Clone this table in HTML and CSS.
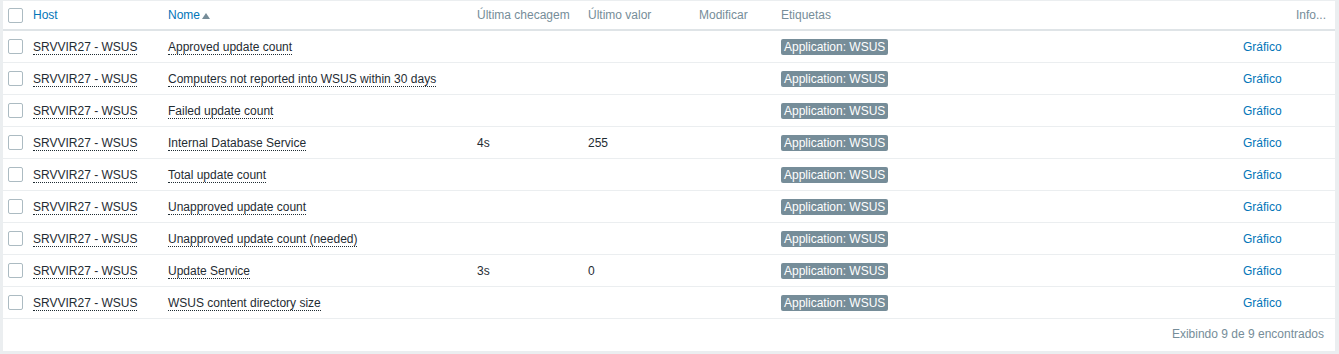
FILE: index.html
```html
<!DOCTYPE html>
<html lang="pt">
<head>
<meta charset="utf-8">
<title>Dados recentes</title>
<link rel="stylesheet" href="styles.css">
</head>
<body>
<div class="panel">
  <table class="list">
    <colgroup>
      <col class="c-check"><col class="c-host"><col class="c-name"><col class="c-last"><col class="c-val"><col class="c-chg"><col class="c-tags"><col class="c-graph"><col class="c-info">
    </colgroup>
    <thead>
      <tr>
        <th><span class="cb"></span></th>
        <th><a class="sort">Host</a></th>
        <th><a class="sort">Nome</a><span class="arrow"></span></th>
        <th>Última checagem</th>
        <th>Último valor</th>
        <th>Modificar</th>
        <th>Etiquetas</th>
        <th></th>
        <th class="right">Info...</th>
      </tr>
    </thead>
    <tbody>
      <tr><td><span class="cb"></span></td><td><span class="dot">SRVVIR27 - WSUS</span></td><td><span class="dot">Approved update count</span></td><td></td><td></td><td></td><td><span class="tag">Application: WSUS</span></td><td><a class="link">Gráfico</a></td><td></td></tr>
      <tr><td><span class="cb"></span></td><td><span class="dot">SRVVIR27 - WSUS</span></td><td><span class="dot">Computers not reported into WSUS within 30 days</span></td><td></td><td></td><td></td><td><span class="tag">Application: WSUS</span></td><td><a class="link">Gráfico</a></td><td></td></tr>
      <tr><td><span class="cb"></span></td><td><span class="dot">SRVVIR27 - WSUS</span></td><td><span class="dot">Failed update count</span></td><td></td><td></td><td></td><td><span class="tag">Application: WSUS</span></td><td><a class="link">Gráfico</a></td><td></td></tr>
      <tr><td><span class="cb"></span></td><td><span class="dot">SRVVIR27 - WSUS</span></td><td><span class="dot">Internal Database Service</span></td><td>4s</td><td>255</td><td></td><td><span class="tag">Application: WSUS</span></td><td><a class="link">Gráfico</a></td><td></td></tr>
      <tr><td><span class="cb"></span></td><td><span class="dot">SRVVIR27 - WSUS</span></td><td><span class="dot">Total update count</span></td><td></td><td></td><td></td><td><span class="tag">Application: WSUS</span></td><td><a class="link">Gráfico</a></td><td></td></tr>
      <tr><td><span class="cb"></span></td><td><span class="dot">SRVVIR27 - WSUS</span></td><td><span class="dot">Unapproved update count</span></td><td></td><td></td><td></td><td><span class="tag">Application: WSUS</span></td><td><a class="link">Gráfico</a></td><td></td></tr>
      <tr><td><span class="cb"></span></td><td><span class="dot">SRVVIR27 - WSUS</span></td><td><span class="dot">Unapproved update count (needed)</span></td><td></td><td></td><td></td><td><span class="tag">Application: WSUS</span></td><td><a class="link">Gráfico</a></td><td></td></tr>
      <tr><td><span class="cb"></span></td><td><span class="dot">SRVVIR27 - WSUS</span></td><td><span class="dot">Update Service</span></td><td>3s</td><td>0</td><td></td><td><span class="tag">Application: WSUS</span></td><td><a class="link">Gráfico</a></td><td></td></tr>
      <tr><td><span class="cb"></span></td><td><span class="dot">SRVVIR27 - WSUS</span></td><td><span class="dot">WSUS content directory size</span></td><td></td><td></td><td></td><td><span class="tag">Application: WSUS</span></td><td><a class="link">Gráfico</a></td><td></td></tr>
    </tbody>
  </table>
  <div class="paging">Exibindo 9 de 9 encontrados</div>
</div>
</body>
</html>
```

FILE: styles.css
```css
html, body {
  margin: 0;
  padding: 0;
  background: #ebeef0;
}
body {
  font-family: "Liberation Sans", Arial, sans-serif;
  font-size: 12px;
  color: #1f2c33;
  padding: 1px 4px 3px 3px;
}
.panel {
  background: #ffffff;
  height: 350px;
}
.list {
  width: 100%;
  border-collapse: collapse;
  table-layout: fixed;
}
.c-check { width: 25px; }
.c-host { width: 135px; }
.c-name { width: 309px; }
.c-last { width: 111px; }
.c-val { width: 111px; }
.c-chg { width: 82px; }
.c-tags { width: 462px; }
.c-graph { width: 51px; }
.c-info { width: auto; }
.list th {
  text-align: left;
  font-weight: normal;
  color: #768d99;
  height: 28px;
  padding: 0 5px;
  border-bottom: 2px solid #dfe4e7;
  white-space: nowrap;
  vertical-align: middle;
}
.list th.right {
  text-align: right;
  padding-right: 9px;
}
.list td {
  height: 31px;
  padding: 0 5px;
  border-bottom: 1px solid #ebeef0;
  vertical-align: middle;
  white-space: nowrap;
  overflow: hidden;
}
.cb {
  display: block;
  width: 13px;
  height: 13px;
  border: 1px solid #acbbc2;
  border-radius: 2px;
  background: #fff;
}
.sort {
  color: #0275b8;
}
.arrow {
  display: inline-block;
  width: 0;
  height: 0;
  margin-left: 2px;
  border-left: 4px solid transparent;
  border-right: 4px solid transparent;
  border-bottom: 6px solid #768d99;
  vertical-align: 0;
}
.dot {
  border-bottom: 1px dotted #1f2c33;
}
.link {
  color: #0275b8;
}
.tag {
  display: inline-block;
  background: #768d99;
  color: #ffffff;
  padding: 0 3px;
  line-height: 16px;
  border-radius: 2px;
}
.paging {
  text-align: right;
  color: #768d99;
  padding: 0 11px 0 5px;
  height: 31px;
  line-height: 31px;
}
```
